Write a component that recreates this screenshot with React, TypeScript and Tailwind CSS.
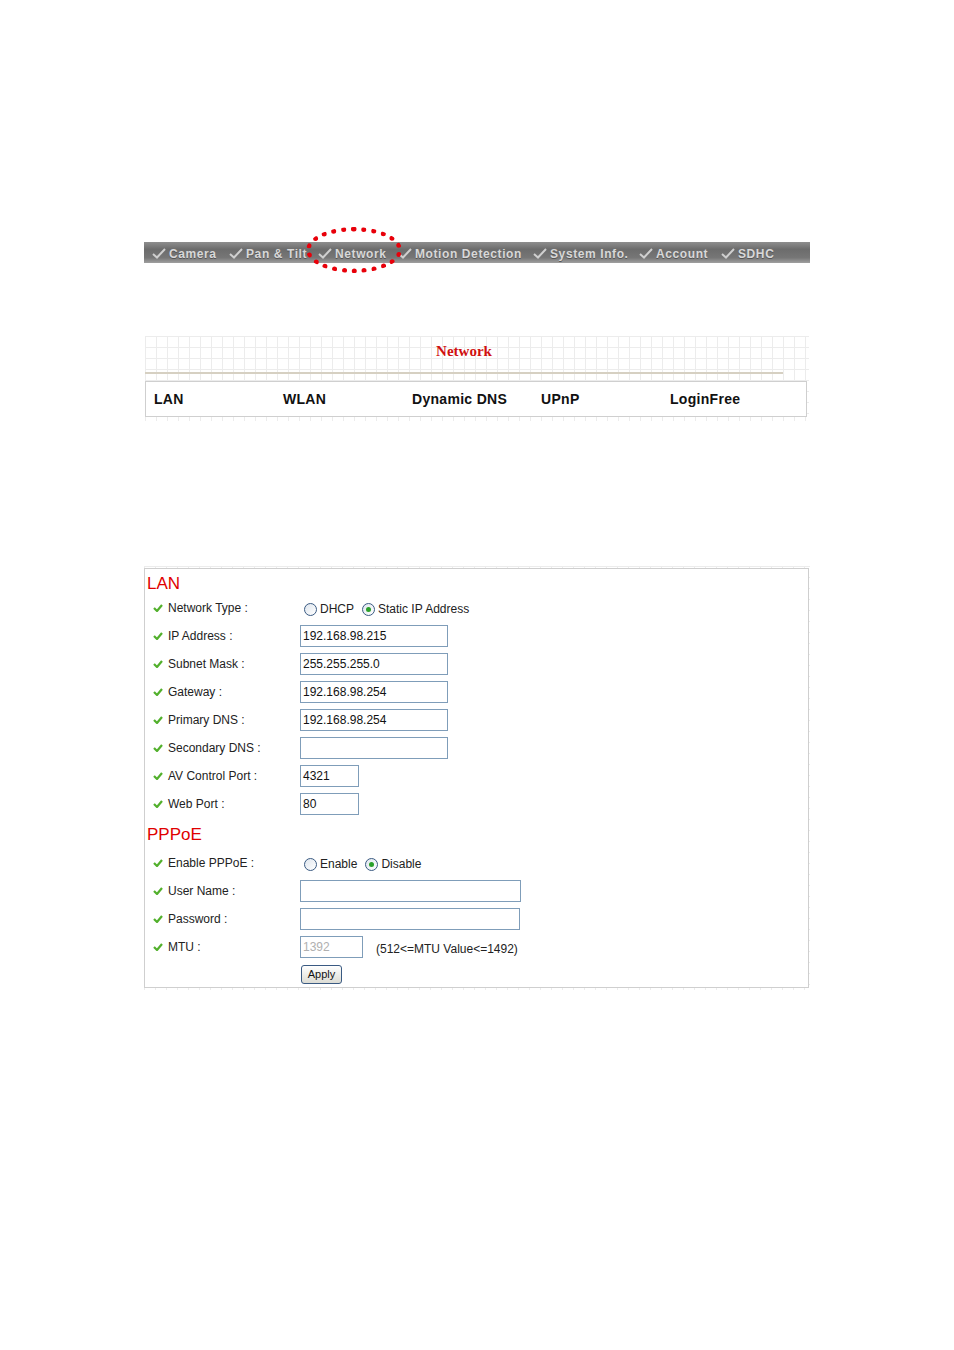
import React from 'react';

const grid =
  'bg-[linear-gradient(to_right,#ececec_1px,transparent_1px),linear-gradient(to_bottom,#ececec_1px,transparent_1px)] bg-[size:11px_11px]';

const MenuCheck = () => (
  <svg width="14" height="11" viewBox="0 0 14 11" className="mr-[3px] shrink-0">
    <path d="M1 6 L5 9.5 L13 1" fill="none" stroke="#cfcfcf" strokeWidth="2" />
  </svg>
);

const GreenCheck = () => (
  <svg width="10" height="8" viewBox="0 0 10 8" className="mr-[5px] shrink-0">
    <path d="M1 4 L4 7 L9 1" fill="none" stroke="#52b02c" strokeWidth="2.2" strokeLinejoin="round" />
  </svg>
);

const Radio = ({ on }: { on?: boolean }) => (
  <span className="inline-flex w-[13px] h-[13px] rounded-full border border-[#3a5a82] bg-gradient-to-br from-[#dfe6ee] to-white items-center justify-center mr-[3px]">
    {on && <span className="w-[5px] h-[5px] rounded-full bg-[#2aa02a]" />}
  </span>
);

const menu: [string, string][] = [
  ['Camera', 'w-[77px]'],
  ['Pan & Tilt', 'w-[89px]'],
  ['Network', 'w-[80px]'],
  ['Motion Detection', 'w-[135px]'],
  ['System Info.', 'w-[106px]'],
  ['Account', 'w-[82px]'],
  ['SDHC', 'w-[60px]'],
];

const Input = ({ w, value, disabled }: { w: string; value?: string; disabled?: boolean }) => (
  <div
    className={`${w} h-[22px] border border-[#7f9db9] bg-white px-[2px] flex items-center text-[12px] ${
      disabled ? 'text-[#b0b0b0]' : 'text-[#111]'
    }`}
  >
    {value}
  </div>
);

const Row = ({ label, children }: { label: string; children?: React.ReactNode }) => (
  <div className="h-[28px] flex items-center">
    <div className="w-[154px] flex items-center pl-[7px]">
      <GreenCheck />
      <span className="text-[12px] text-[#222]">{label}</span>
    </div>
    <div className="flex items-center">{children}</div>
  </div>
);

export default function App() {
  return (
    <div className="w-[954px] h-[1350px] bg-white font-['Liberation_Sans',Arial,sans-serif]">
      <div className="pt-[242px] pl-[144px]">
        {/* top menu */}
        <div className="relative w-[666px] h-[21px] bg-[linear-gradient(to_bottom,#8e8e8e,#6c6c6c_35%,#767676_75%,#a0a0a0)] flex items-center pl-[8px] pt-[2px]">
          {menu.map(([m, w]) => (
            <div key={m} className={`${w} shrink-0 flex items-center text-[12px] font-bold tracking-[0.6px] text-[#d8d8d8] [text-shadow:0_1px_0_#555]`}>
              <MenuCheck />
              <span className="whitespace-nowrap">{m}</span>
            </div>
          ))}
          <div className="absolute left-[162px] top-[-15px] w-[96px] h-[46px] rounded-[50%] border-[5px] border-dotted border-[#e8000a]" />
        </div>

        {/* network header */}
        <div className={`mt-[73px] ml-[1px] w-[664px] ${grid} pb-[4px]`}>
          <div className="w-[638px] h-[30px] flex items-center justify-center">
            <span className="font-['Liberation_Serif',serif] font-bold text-[15px] text-[#d01010]">Network</span>
          </div>
          <div className="mt-[6px] w-[638px] h-[2px] bg-[#d6d0c2]" />
          <div className="mt-[7px] w-[662px] h-[36px] border border-[#cfcfcf] bg-white flex items-center">
            {['LAN', 'WLAN', 'Dynamic DNS', 'UPnP', 'LoginFree'].map((t) => (
              <div key={t} className="w-[129px] pl-[8px] text-[14px] tracking-[0.3px] font-bold text-[#111]">
                {t}
              </div>
            ))}
          </div>
        </div>

        {/* LAN panel */}
        <div className={`mt-[145px] w-[666px] ${grid} py-[2px]`}>
          <div className="w-[665px] border border-[#cfcfcf] bg-white pl-[1px]">
            <div className="h-[25px] flex items-start pt-[2px] pl-[1px] text-[17px] text-[#e00000]">LAN</div>
            <Row label="Network Type :">
              <div className="flex items-center text-[12px] text-[#222] pl-[4px] pt-[2px]">
                <Radio />
                <span className="mr-[8px]">DHCP</span>
                <Radio on />
                <span>Static IP Address</span>
              </div>
            </Row>
            <Row label="IP Address :">
              <Input w="w-[148px]" value="192.168.98.215" />
            </Row>
            <Row label="Subnet Mask :">
              <Input w="w-[148px]" value="255.255.255.0" />
            </Row>
            <Row label="Gateway :">
              <Input w="w-[148px]" value="192.168.98.254" />
            </Row>
            <Row label="Primary DNS :">
              <Input w="w-[148px]" value="192.168.98.254" />
            </Row>
            <Row label="Secondary DNS :">
              <Input w="w-[148px]" />
            </Row>
            <Row label="AV Control Port :">
              <Input w="w-[59px]" value="4321" />
            </Row>
            <Row label="Web Port :">
              <Input w="w-[59px]" value="80" />
            </Row>
            <div className="h-[31px] flex items-center pt-[2px] pl-[1px] text-[17px] text-[#e00000]">PPPoE</div>
            <Row label="Enable PPPoE :">
              <div className="flex items-center text-[12px] text-[#222] pl-[4px] pt-[2px]">
                <Radio />
                <span className="mr-[8px]">Enable</span>
                <Radio on />
                <span>Disable</span>
              </div>
            </Row>
            <Row label="User Name :">
              <Input w="w-[221px]" />
            </Row>
            <Row label="Password :">
              <Input w="w-[220px]" />
            </Row>
            <Row label="MTU :">
              <Input w="w-[63px]" value="1392" disabled />
              <span className="ml-[13px] text-[12px] text-[#222] pt-[4px]">(512&lt;=MTU Value&lt;=1492)</span>
            </Row>
            <div className="h-[26px] flex items-center pl-[155px]">
              <div className="w-[41px] h-[19px] rounded-[3px] border border-[#3a5a82] bg-gradient-to-b from-white to-[#dcdcd4] flex items-center justify-center text-[11px] text-[#111]">
                Apply
              </div>
            </div>
          </div>
        </div>
      </div>
    </div>
  );
}
